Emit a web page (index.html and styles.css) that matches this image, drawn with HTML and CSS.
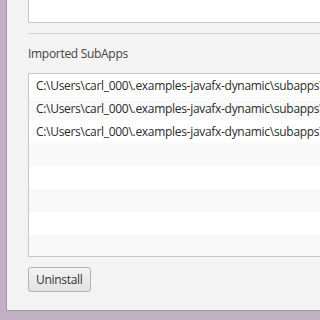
FILE: index.html
```html
<!DOCTYPE html>
<html lang="en">
<head>
    <meta charset="UTF-8">
    <title>SubApps</title>
    <link rel="stylesheet" href="styles.css">
</head>
<body>
    <div class="stage">
        <div class="top-box"></div>
        <div class="separator"></div>
        <div class="label">Imported SubApps</div>
        <div class="list">
            <div class="row">C:\Users\carl_000\.examples-javafx-dynamic\subapps\</div>
            <div class="row">C:\Users\carl_000\.examples-javafx-dynamic\subapps\</div>
            <div class="row">C:\Users\carl_000\.examples-javafx-dynamic\subapps\</div>
            <div class="row"></div>
            <div class="row"></div>
            <div class="row"></div>
            <div class="row"></div>
            <div class="row"></div>
        </div>
        <button class="btn">Uninstall</button>
    </div>
</body>
</html>
```

FILE: styles.css
```css
html, body {
    margin: 0;
    padding: 0;
}
body {
    background-color: #c2b1c5;
    font-family: "Open Sans", "Noto Sans", sans-serif;
    font-size: 12px;
    letter-spacing: -0.3px;
    color: #333333;
    width: 320px;
    height: 320px;
    overflow: hidden;
}
.stage {
    margin-left: 6px;
    height: 311px;
    border-left: 1px solid #a796aa;
    border-bottom: 1px solid #a796aa;
    background-color: #f3f3f3;
    padding-left: 21px;
    overflow: hidden;
    box-sizing: border-box;
}
.top-box {
    width: 400px;
    height: 22px;
    background-color: #ffffff;
    border-left: 1px solid #c6c6c6;
    border-bottom: 1px solid #c6c6c6;
}
.separator {
    width: 400px;
    height: 1px;
    margin-top: 10px;
    background-color: #d3d3d3;
}
.label {
    margin-top: 12px;
    height: 16px;
    line-height: 16px;
    color: #444444;
}
.list {
    margin-top: 11px;
    width: 400px;
    height: 184px;
    box-sizing: border-box;
    border: 1px solid #c6c6c6;
    background-color: #ffffff;
    overflow: hidden;
}
.row {
    height: 23px;
    line-height: 23px;
    padding-left: 7px;
    white-space: nowrap;
    color: #2b2b2b;
}
.row:nth-child(even) {
    background-color: #f9f9f9;
}
.btn {
    display: block;
    margin-top: 10px;
    height: 25px;
    padding: 0 7px;
    font-family: inherit;
    font-size: 12px;
    letter-spacing: -0.3px;
    color: #333333;
    background: linear-gradient(#f3f3f3, #e2e2e2);
    border: 1px solid #b2b2b2;
    border-radius: 3px;
}
```
